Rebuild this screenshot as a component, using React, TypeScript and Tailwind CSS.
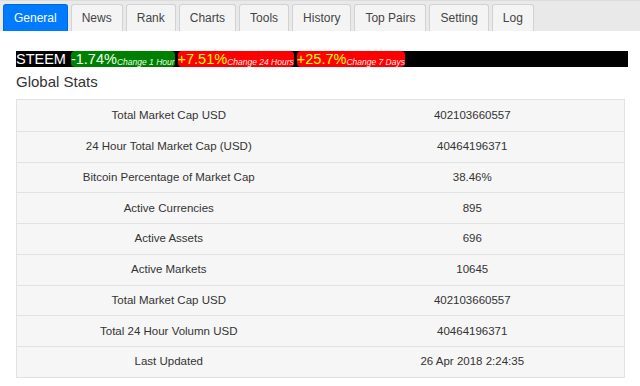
import React from "react";

const tabs = ["General", "News", "Rank", "Charts", "Tools", "History", "Top Pairs", "Setting", "Log"];

const stats: [string, string][] = [
  ["Total Market Cap USD", "402103660557"],
  ["24 Hour Total Market Cap (USD)", "40464196371"],
  ["Bitcoin Percentage of Market Cap", "38.46%"],
  ["Active Currencies", "895"],
  ["Active Assets", "696"],
  ["Active Markets", "10645"],
  ["Total Market Cap USD", "402103660557"],
  ["Total 24 Hour Volumn USD", "40464196371"],
  ["Last Updated", "26 Apr 2018 2:24:35"],
];

function Change({ value, label, tone }: { value: string; label: string; tone: "up" | "down" }) {
  return (
    <span
      className={`flex items-end h-full rounded-[4px] ${
        tone === "down" ? "bg-[#008000] text-[#f0fff0]" : "bg-[#ff0000] text-[#ffff00]"
      }`}
    >
      <span className="text-[14.5px] leading-[16px]">{value}</span>
      <span className={`text-[8.5px] italic leading-[10px] ${tone === "down" ? "text-[#e8ffe8]" : "text-[#ffe8e8]"}`}>
        {label}
      </span>
    </span>
  );
}

export default function App() {
  return (
    <div className="w-[640px] h-[386px] bg-white text-[#333] font-['Liberation_Sans',Arial,sans-serif] overflow-hidden">
      <div className="h-[31px] bg-[#e9e9e9] border-t border-[#dcdcdc] flex items-end gap-[3px] pl-[3px]">
        {tabs.map((t, i) => (
          <div
            key={t}
            className={`h-[27px] px-[10px] flex items-center text-[12px] rounded-t-[3px] border border-b-0 ${
              i === 0 ? "bg-[#007bff] border-[#0069d9] text-white" : "bg-[#f4f4f4] border-[#d2d2d2] text-[#444]"
            }`}
          >
            {t}
          </div>
        ))}
      </div>

      <div className="pl-4">
        <div className="mt-5 w-[612px] h-4 bg-black flex items-stretch gap-[3px] text-white">
          <span className="text-[14.5px] leading-[16px] pr-[2px]">STEEM</span>
          <Change value="-1.74%" label="Change 1 Hour" tone="down" />
          <Change value="+7.51%" label="Change 24 Hours" tone="up" />
          <Change value="+25.7%" label="Change 7 Days" tone="up" />
        </div>

        <h2 className="mt-[5px] text-[15px] leading-[20px]">Global Stats</h2>

        <div className="mt-[7px] w-[609px] border border-[#e2e2e2] bg-[#f6f6f6]">
          {stats.map(([k, v], i) => (
            <div key={i} className={`h-[30.75px] grid grid-cols-2 items-center text-[11.5px] text-center ${i > 0 ? "border-t border-[#e2e2e2]" : ""}`}>
              <span>{k}</span>
              <span>{v}</span>
            </div>
          ))}
        </div>
      </div>
    </div>
  );
}
